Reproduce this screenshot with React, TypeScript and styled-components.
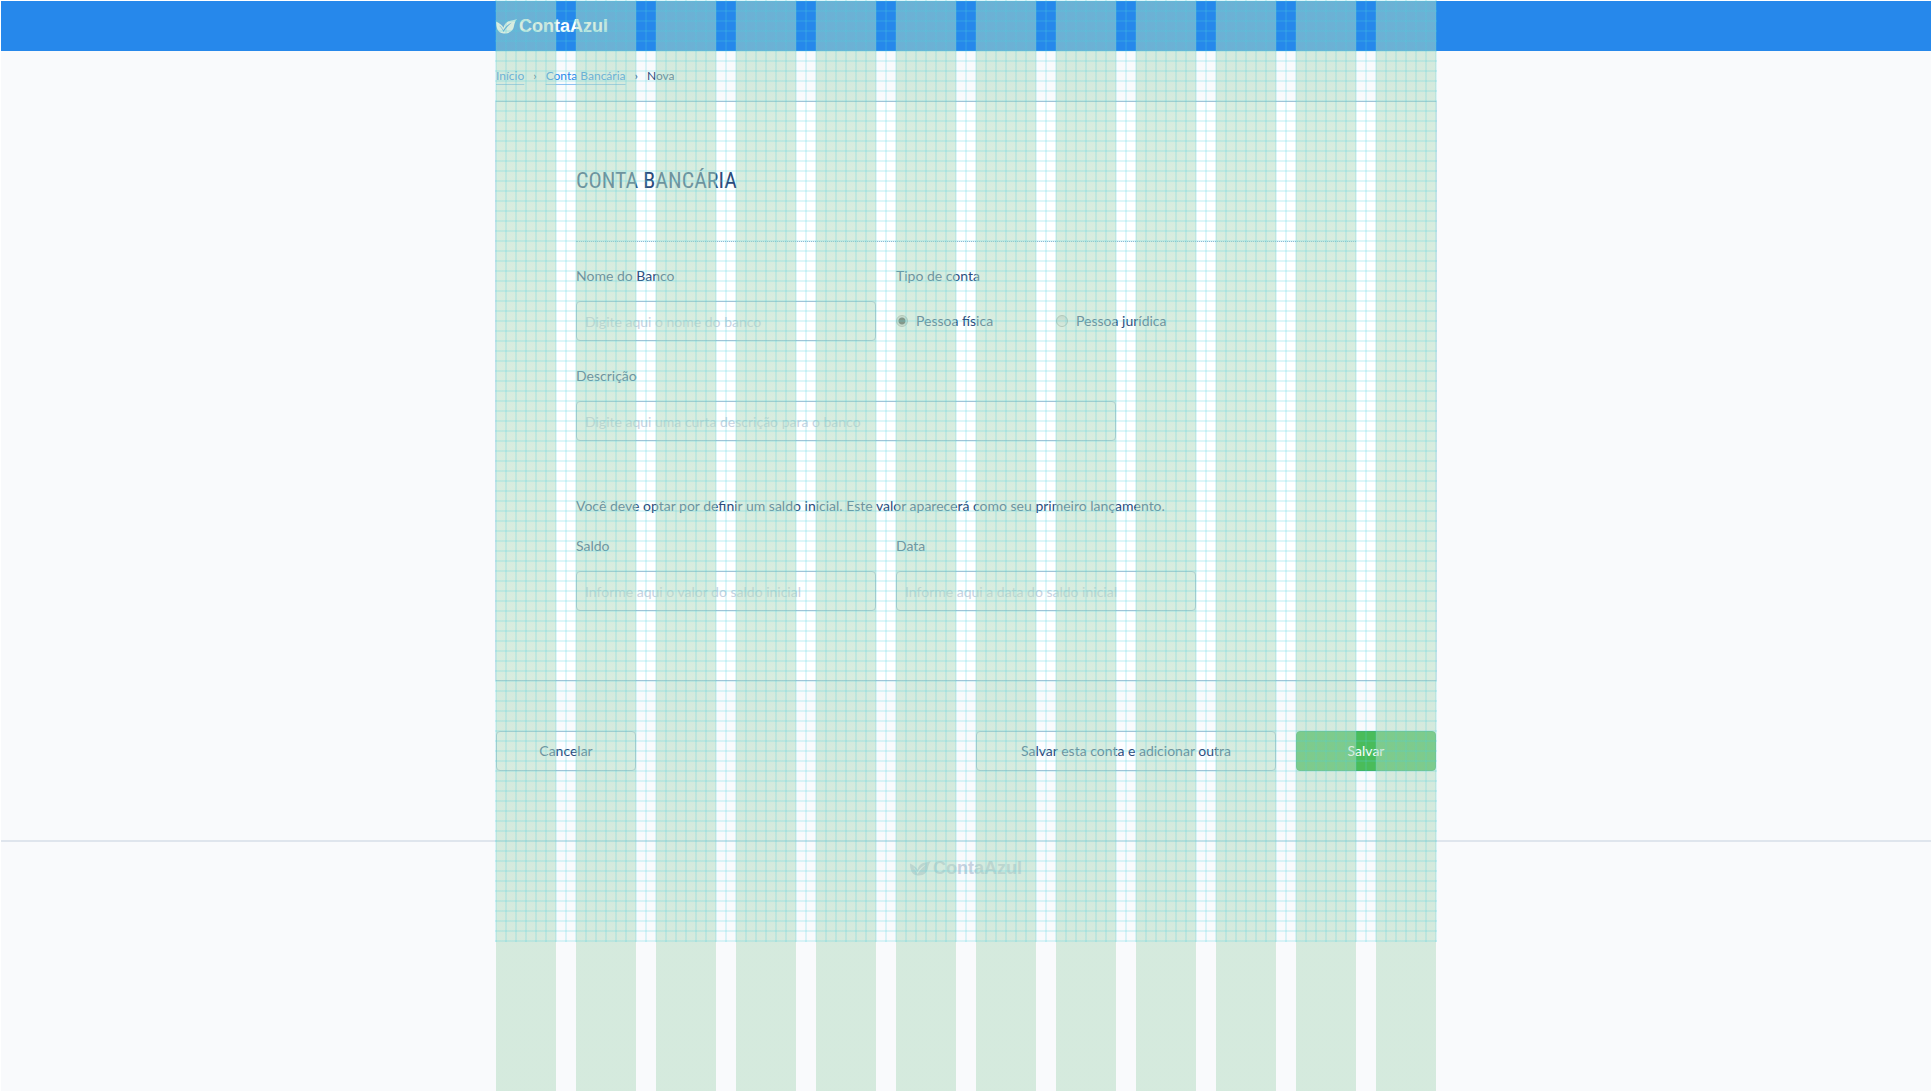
import React, { useState } from "react";
import styled, { createGlobalStyle } from "styled-components";

const ink = "#2b4a7b";
const line = "#b3c1d6";
const softLine = "#dfe5ed";

const GlobalStyle = createGlobalStyle`
  *, *::before, *::after { box-sizing: border-box; }
  body {
    margin: 0;
    background: #f9fafc;
    color: ${ink};
    font-family: Lato, "Open Sans", sans-serif;
    font-size: 14px;
    line-height: 20px;
  }
  input, button { font: inherit; color: inherit; }
`;

const Page = styled.div`
  position: relative;
  min-height: 100vh;
  border: 1px solid #fff;
`;

const Container = styled.div`
  width: 100%;
  max-width: 940px;
  margin: 0 auto;
`;

const TopBar = styled.header`
  background: #2688eb;
`;

const TopBarInner = styled(Container)`
  display: flex;
  align-items: center;
  height: 50px;
`;

const LogoLink = styled.a<{ $muted?: boolean }>`
  display: inline-flex;
  align-items: center;
  gap: 2px;
  color: ${(p) => (p.$muted ? "#c8d1df" : "#fff")};
  font-family: "Liberation Sans", Arial, sans-serif;
  font-size: 18px;
  font-weight: 700;
  line-height: 20px;
  text-decoration: none;
`;

const Crumbs = styled.nav`
  display: flex;
  align-items: center;
  height: 50px;
  font-size: 12px;

  ol {
    display: flex;
    gap: 9px;
    margin: 0;
    padding: 0;
    list-style: none;
  }
  li { display: flex; gap: 9px; }
  a {
    color: #2688eb;
    text-decoration-color: #8fc1f3;
    text-underline-offset: 4px;
  }
`;

const Card = styled.section`
  display: flex;
  flex-direction: column;
  padding: 0 80px 69px;
  background: #fff;
  border-top: 1px solid ${line};
  border-bottom: 1px solid ${line};
  box-shadow: -1px 0 ${softLine}, 1px 0 ${softLine};
`;

const Title = styled.h1`
  margin: 0 0 24px;
  padding: 64px 0 45px;
  border-bottom: 1px dotted #9fb3d2;
  font-family: "Liberation Sans Narrow", "Roboto Condensed", "Open Sans Condensed", sans-serif;
  font-size: 22px;
  font-weight: 400;
  line-height: 30px;
  text-transform: uppercase;
`;

const FieldGrid = styled.div`
  display: grid;
  grid-template-columns: repeat(10, 1fr);
  gap: 25px 20px;
`;

const Field = styled.div<{ $span: number }>`
  grid-column: span ${(p) => p.$span};
  display: flex;
  flex-direction: column;
  gap: 15px;
`;

const TextInput = styled.input`
  width: 100%;
  height: 40px;
  padding: 0 8px;
  border: 1px solid ${line};
  border-radius: 4px;
  background: #fff;
  outline: none;

  &::placeholder { color: #c8d1e0; opacity: 1; }
  &:focus { border-color: #2688eb; }
`;

const RadioField = styled.fieldset`
  grid-column: span 6;
  margin: 0;
  padding: 0;
  border: 0;
  min-width: 0;

  legend { padding: 0; margin-bottom: 15px; }
`;

const RadioRow = styled.div`
  display: grid;
  grid-template-columns: repeat(6, 1fr);
  column-gap: 20px;
`;

const RadioLabel = styled.label`
  grid-column: span 2;
  display: flex;
  align-items: center;
  gap: 8px;
  height: 40px;
  white-space: nowrap;
`;

const Radio = styled.input`
  appearance: none;
  flex: none;
  width: 12px;
  height: 12px;
  margin: 0;
  border: 1px solid #b5b5b5;
  border-radius: 50%;
  background: linear-gradient(#ddd, #fafafa);

  &:checked { background: radial-gradient(circle, #555 0 3px, #ddd 4px); }
`;

const Note = styled.p`
  margin: 55px 0 20px;
`;

const Actions = styled.div`
  display: flex;
  gap: 20px;
  margin: 50px 0 69px;
`;

const Button = styled.button<{ $wide?: boolean; $primary?: boolean }>`
  width: ${(p) => (p.$wide ? "300px" : "140px")};
  height: 40px;
  padding: 0;
  border: 1px solid ${(p) => (p.$primary ? "#3fae50" : line)};
  border-radius: 4px;
  background: ${(p) => (p.$primary ? "#4abc5a" : "#fdfdff")};
  color: ${(p) => (p.$primary ? "#fff" : ink)};
  cursor: pointer;

  &:first-child { margin-right: auto; }
`;

const Footer = styled.footer`
  display: flex;
  justify-content: center;
  padding: 16px 0 61px;
  border-top: 2px solid ${softLine};
`;

const ColumnOverlay = styled.div`
  position: absolute;
  inset: 0;
  width: 100%;
  max-width: 940px;
  margin: 0 auto;
  pointer-events: none;
  background: repeating-linear-gradient(
    90deg,
    rgba(177, 218, 191, 0.5) 0 60px,
    transparent 60px 80px
  );
`;

const BaselineOverlay = styled.div`
  position: absolute;
  inset: -1px 0 auto;
  width: 100%;
  max-width: 942px;
  height: 942px;
  margin: 0 auto;
  pointer-events: none;
  background:
    repeating-linear-gradient(90deg, rgba(72, 208, 222, 0.18) 0 2px, transparent 2px 10px),
    repeating-linear-gradient(rgba(72, 208, 222, 0.18) 0 2px, transparent 2px 10px);
`;

function Logo({ muted }: { muted?: boolean }) {
  return (
    <LogoLink href="#" $muted={muted}>
      <svg width="21" height="15" viewBox="0 0 21 15" fill="currentColor" aria-hidden="true">
        <path d="M0 2.500C0 8 1.500 14 7.500 14.500C14 15 17.500 11 18 7C18.300 4.500 19.500 2 21 0C18 1.500 13 1 10 4C8.600 5.400 8 7 7.500 8.800C6 6 3.500 4 0 2.500ZM3 6.500C5 7.500 6.400 9 7.200 11.300C9.500 7.500 12.500 5 16 3.500C12.500 6.300 9.500 9.500 7.500 13C6.500 10.500 5 8.300 3 6.500Z" fillRule="evenodd" />
      </svg>
      <span>ContaAzul</span>
    </LogoLink>
  );
}

type TextFieldProps = { id: string; label: string; placeholder: string; span: number };

function TextField({ id, label, placeholder, span }: TextFieldProps) {
  return (
    <Field $span={span}>
      <label htmlFor={id}>{label}</label>
      <TextInput id={id} type="text" placeholder={placeholder} />
    </Field>
  );
}

export default function App() {
  const [kind, setKind] = useState("fisica");
  return (
    <>
      <GlobalStyle />
      <Page>
        <TopBar>
          <TopBarInner>
            <Logo />
          </TopBarInner>
        </TopBar>
        <Container as="main">
          <Crumbs>
            <ol>
              <li><a href="#">Início</a><span>›</span></li>
              <li><a href="#">Conta Bancária</a><span>›</span></li>
              <li>Nova</li>
            </ol>
          </Crumbs>
          <form onSubmit={(e) => e.preventDefault()}>
            <Card>
              <Title>Conta Bancária</Title>
              <FieldGrid>
                <TextField id="nome" label="Nome do Banco" placeholder="Digite aqui o nome do banco" span={4} />
                <RadioField>
                  <legend>Tipo de conta</legend>
                  <RadioRow>
                    <RadioLabel>
                      <Radio type="radio" name="tipo" checked={kind === "fisica"} onChange={() => setKind("fisica")} />
                      Pessoa física
                    </RadioLabel>
                    <RadioLabel>
                      <Radio type="radio" name="tipo" checked={kind === "juridica"} onChange={() => setKind("juridica")} />
                      Pessoa jurídica
                    </RadioLabel>
                  </RadioRow>
                </RadioField>
                <TextField id="descricao" label="Descrição" placeholder="Digite aqui uma curta descrição para o banco" span={7} />
              </FieldGrid>
              <Note>Você deve optar por definir um saldo inicial. Este valor aparecerá como seu primeiro lançamento.</Note>
              <FieldGrid>
                <TextField id="saldo" label="Saldo" placeholder="Informe aqui o valor do saldo inicial" span={4} />
                <TextField id="data" label="Data" placeholder="Informe aqui a data do saldo inicial" span={4} />
              </FieldGrid>
            </Card>
            <Actions>
              <Button type="button">Cancelar</Button>
              <Button type="submit" $wide>Salvar esta conta e adicionar outra</Button>
              <Button type="submit" $primary>Salvar</Button>
            </Actions>
          </form>
        </Container>
        <Footer>
          <Logo muted />
        </Footer>
        <ColumnOverlay />
        <BaselineOverlay />
      </Page>
    </>
  );
}
